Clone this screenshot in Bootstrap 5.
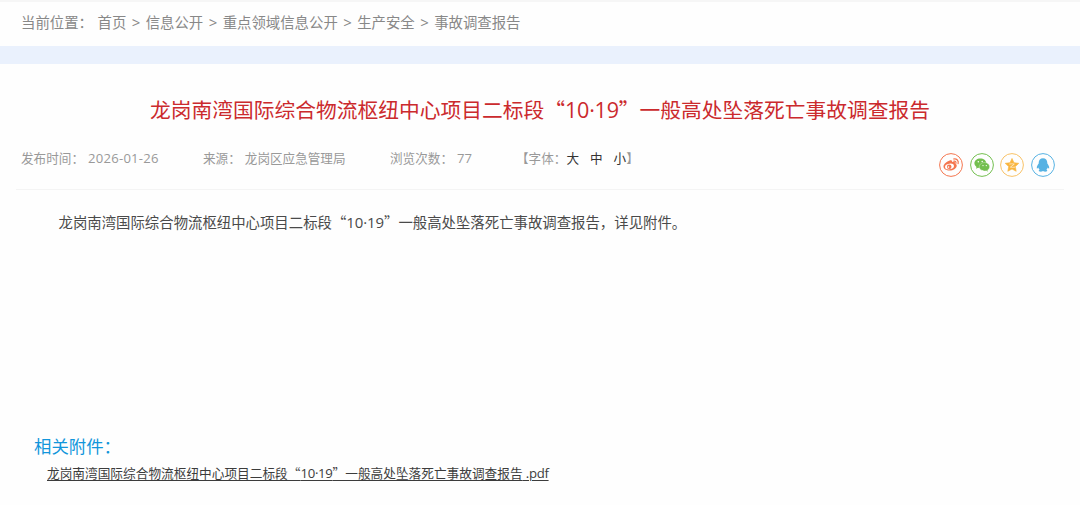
<!DOCTYPE html>
<html lang="zh-CN">
<head>
    <meta charset="UTF-8">
    <meta name="viewport" content="width=device-width, initial-scale=1.0">
    <title>事故调查报告</title>
    <link href="https://cdn.jsdelivr.net/npm/bootstrap@5.3.0/dist/css/bootstrap.min.css" rel="stylesheet">
    <style>
        body {
            font-family: "Noto Sans CJK SC", sans-serif;
            font-size: 14.4px;
            color: #4a4a4a;
            background: #fefefe;
            overflow: hidden;
        }
        a {
            color: inherit;
            text-decoration: none;
        }
        .latin {
            font-family: "Open Sans", "Noto Sans CJK SC", sans-serif;
            font-size: 1.04em;
            line-height: 1;
        }
        .crumb-bar {
            height: 46px;
            padding: 0 21px 4px;
            border-top: 2px solid #f6f6f6;
            color: #888;
            white-space: pre;
        }
        .crumb-sep {
            width: 19.4px;
            text-align: center;
        }
        .crumb-label {
            width: 76.5px;
        }
        .blue-band {
            height: 18px;
            background: #eaf1fd;
        }
        .article-title {
            padding-top: 29px;
            font-size: 20.75px;
            line-height: 32px;
            color: #cb2a2d;
        }
        .article-title .latin {
            letter-spacing: -0.01em;
        }
        .meta-row {
            height: 65px;
            margin: 0 16px;
            padding-left: 5px;
            border-bottom: 1px solid #f4f4f4;
            font-size: 12.6px;
            line-height: 18px;
            color: #999;
        }
        .meta-row > span {
            margin-top: 24px;
        }
        .meta-date { width: 182px; }
        .meta-date .latin { letter-spacing: 0.25px; }
        .meta-source { width: 187px; }
        .meta-views { width: 126px; }
        .meta-label { margin-right: 4px; }
        .size-link {
            color: #333;
            margin-right: 11px;
        }
        .size-last {
            margin-right: 0;
        }
        .share-list {
            gap: 6.7px;
            padding: 28px 9px 0 0;
        }
        .share-list svg {
            display: block;
            width: 24px;
            height: 24px;
        }
        .article-body {
            height: 243px;
            padding: 20px 16px 0 58.5px;
            line-height: 24px;
        }
        .article-body .latin {
            letter-spacing: -0.1px;
        }
        .attach-title {
            padding-left: 34px;
            font-size: 17.4px;
            line-height: 26px;
            color: #1296db;
        }
        .attach-link {
            margin-left: 47px;
            font-size: 12.68px;
            line-height: 27px;
            color: #3c3c3c;
            text-decoration: underline;
            text-underline-offset: 2px;
        }
        .attach-link .latin {
            letter-spacing: -0.3px;
        }
    </style>
</head>
<body>
    <nav class="crumb-bar d-flex align-items-center">
        <span class="crumb-label">当前位置：</span>
        <a href="#">首页</a><span class="crumb-sep latin">&gt;</span>
        <a href="#">信息公开</a><span class="crumb-sep latin">&gt;</span>
        <a href="#">重点领域信息公开</a><span class="crumb-sep latin">&gt;</span>
        <a href="#">生产安全</a><span class="crumb-sep latin">&gt;</span>
        <a href="#">事故调查报告</a>
    </nav>
    <div class="blue-band"></div>

    <main>
        <h1 class="article-title text-center fw-normal m-0">龙岗南湾国际综合物流枢纽中心项目二标段“<span class="latin">10·19</span>”一般高处坠落死亡事故调查报告</h1>

        <div class="meta-row d-flex">
            <span class="meta-date"><span class="meta-label">发布时间：</span><span class="latin">2026-01-26</span></span>
            <span class="meta-source"><span class="meta-label">来源：</span>龙岗区应急管理局</span>
            <span class="meta-views"><span class="meta-label">浏览次数：</span><span class="latin">77</span></span>
            <span class="d-flex">【字体：<a class="size-link" href="#">大</a><a class="size-link" href="#">中</a><a class="size-link size-last" href="#">小</a>】</span>

            <div class="share-list d-flex ms-auto">
                <!-- weibo -->
                <svg viewBox="0 0 24 24" fill="none">
                    <circle cx="12" cy="12" r="11.4" stroke="#f4764f"/>
                    <path d="M10.7 7.500c1.200-.7 2.700-.3 2.300 1.500 1.900-.8 3.500-.3 2.900 1.500 1.400.4 2 1.300 1.800 2.400-.4 2.500-3.500 4.600-7 4.600-3.500 0-6.200-1.600-6.200-4 0-2.300 3.200-5.200 6.200-6z" fill="#f4764f"/>
                    <ellipse cx="10.500" cy="13.500" rx="4.500" ry="2.800" transform="rotate(-8 10.500 13.500)" fill="#fff"/>
                    <circle cx="10.200" cy="13.700" r="2.300" fill="#f4764f"/>
                    <circle cx="9.500" cy="14.100" r=".8" fill="#fff"/>
                    <path d="M14.600 6c3.100-.6 5.400 1.700 4.500 4.700M14.900 8.200c1.500-.2 2.400.7 2 2.100" stroke="#f4764f" stroke-width="1.200" stroke-linecap="round"/>
                </svg>
                <!-- wechat -->
                <svg viewBox="0 0 24 24" fill="none">
                    <circle cx="12" cy="12" r="11.400" stroke="#73bf4f"/>
                    <path d="M10.300 5.500c-3.300 0-5.900 2.100-5.900 4.800 0 1.500.8 2.700 2.100 3.600l-.5 1.800 2.100-1c.7.2 1.400.3 2.200.3 3.300 0 5.900-2.100 5.900-4.800s-2.600-4.700-5.900-4.700z" fill="#73bf4f"/>
                    <path d="M14.500 9.500c-2.900 0-5.200 1.800-5.200 4.200s2.300 4.200 5.200 4.200c.6 0 1.200-.1 1.700-.2l1.900 1-.5-1.600c1.200-.8 2-2 2-3.400 0-2.400-2.300-4.200-5.100-4.200z" fill="#73bf4f" stroke="#fff" stroke-width=".3"/>
                    <g fill="#fff"><circle cx="8.300" cy="8.800" r=".75"/><circle cx="12.200" cy="8.600" r=".75"/><circle cx="13" cy="12.600" r=".65"/><circle cx="16.300" cy="12.600" r=".65"/></g>
                </svg>
                <!-- qzone -->
                <svg viewBox="0 0 24 24" fill="none">
                    <circle cx="12" cy="12" r="11.400" stroke="#f8c267"/>
                    <path d="M12 5.400l2 4.300 4.800.6-3.500 3.300.9 4.700-4.200-2.300-4.200 2.300.9-4.700-3.500-3.300 4.800-.6z" fill="#f9b53f" stroke="#f9b53f" stroke-width=".6" stroke-linejoin="round"/>
                    <path d="M9.300 11.100c1.700-.4 3.300-.4 5 0l-3.900 3c1.500.3 3.100.3 4.800 0" stroke="#fff" stroke-width=".6"/>
                </svg>
                <!-- qq -->
                <svg viewBox="0 0 24 24" fill="none">
                    <circle cx="12" cy="12" r="11.400" stroke="#56b2e3"/>
                    <path d="M12 5.200c-2.700 0-4.300 1.900-4.300 4.600v.8c-1 1.300-2.100 2.900-1.900 4.600.1.700.9.200 1.500-.7.200.9.700 1.600 1.300 2.200-1.100.4-1.400 1.700.3 1.900 1.100.1 2.400-.1 3.100-.6.700.5 2 .7 3.100.6 1.700-.2 1.400-1.500.3-1.900.6-.6 1.100-1.300 1.300-2.200.6.900 1.400 1.400 1.500.7.200-1.700-.9-3.300-1.900-4.600v-.8c0-2.700-1.600-4.600-4.300-4.600z" fill="#56b2e3"/>
                </svg>
            </div>
        </div>

        <div class="article-body">龙岗南湾国际综合物流枢纽中心项目二标段“<span class="latin">10·19</span>”一般高处坠落死亡事故调查报告，详见附件。</div>

        <div class="attach-title">相关附件：</div>
        <a class="attach-link d-inline-block" href="#">龙岗南湾国际综合物流枢纽中心项目二标段“<span class="latin">10·19</span>”一般高处坠落死亡事故调查报告<span class="latin"> .pdf</span></a>
    </main>

    <script src="https://cdn.jsdelivr.net/npm/bootstrap@5.3.0/dist/js/bootstrap.bundle.min.js"></script>
</body>
</html>
